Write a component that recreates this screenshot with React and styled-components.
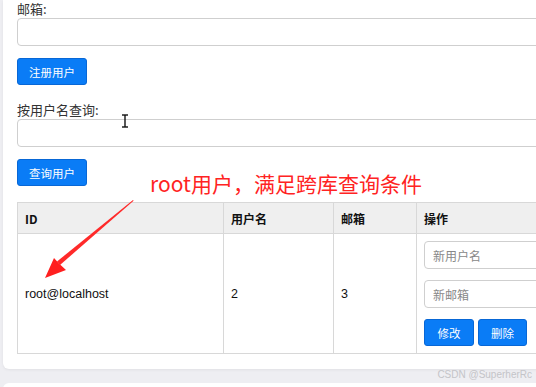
import React from 'react'
import styled, { createGlobalStyle } from 'styled-components'

const GlobalStyle = createGlobalStyle`
  html, body {
    margin: 0;
    padding: 0;
    background: #eeeef2;
    overflow: hidden;
  }
  body {
    font-family: "Noto Sans CJK SC", "Noto Sans", sans-serif;
  }
`

const Page = styled.div`
  position: relative;
  width: 536px;
  height: 387px;
  overflow: hidden;
  padding-left: 3px;
  box-sizing: border-box;
`

const Card = styled.div`
  width: 600px;
  background: #fff;
  border-radius: 0 0 6px 6px;
  padding: 2px 0 15px 14px;
  box-sizing: border-box;
  box-shadow: 0 1px 3px rgba(0, 0, 0, 0.06);
`

const NextCard = styled.div`
  width: 600px;
  height: 20px;
  margin-top: 14px;
  background: #fff;
  border-radius: 6px 6px 0 0;
`

const Field = styled.div`
  display: flex;
  flex-direction: column;
  gap: 2px;
`

const Label = styled.label`
  font-size: 13px;
  line-height: 14px;
  color: #333;
`

const TextInput = styled.input`
  width: 560px;
  height: 28px;
  box-sizing: border-box;
  border: 1px solid #cfcfcf;
  border-radius: 4px;
  background: #fff;
  padding: 0 8px;
  font-family: inherit;
  font-size: 12px;
  outline: none;
  &::placeholder {
    color: #888;
  }
`

const Button = styled.button`
  width: ${p => p.$w || 70}px;
  height: 27px;
  border: 1px solid #0867d6;
  border-radius: 3px;
  background: #0a7cf6;
  color: #fff;
  font-family: inherit;
  font-size: 11.5px;
  padding: 0;
  cursor: pointer;
  margin-top: ${p => p.$mt || 0}px;
`

const Form = styled.div`
  display: flex;
  flex-direction: column;
  align-items: flex-start;
`

const Spacer = styled.div`
  height: ${p => p.$h}px;
`

const Table = styled.table`
  border-collapse: collapse;
  table-layout: fixed;
  width: 600px;
  margin-top: 16px;
  font-size: 12px;
  color: #111;
`

const Th = styled.th`
  width: ${p => p.$w}px;
  height: 31px;
  box-sizing: border-box;
  background: #efefef;
  border: 1px solid #d8d8d8;
  text-align: left;
  padding: 0 7px;
  font-weight: 700;
  font-size: 12px;
`

const Td = styled.td`
  height: 120px;
  box-sizing: border-box;
  border: 1px solid #d8d8d8;
  padding: 0 7px;
  vertical-align: middle;
  font-family: "Liberation Sans", "Noto Sans CJK SC", sans-serif;
  font-size: 12.5px;
`

const ActionCell = styled(Td)`
  padding: 7px 7px;
  font-family: "Noto Sans CJK SC", sans-serif;
`

const ActionBox = styled.div`
  display: flex;
  flex-direction: column;
  gap: 11px;
`

const ButtonRow = styled.div`
  display: flex;
  gap: 4px;
`

const Note = styled.div`
  position: absolute;
  left: 150px;
  top: 169px;
  color: #ff2323;
  font-size: 21px;
  line-height: 28px;
  white-space: nowrap;
`

const Overlay = styled.svg`
  position: absolute;
  left: 0;
  top: 0;
  pointer-events: none;
`

const Watermark = styled.div`
  position: absolute;
  right: 4px;
  top: 369px;
  font-family: "Liberation Sans", Arial, sans-serif;
  font-size: 10px;
  color: #c4c4c8;
`

const App = () => {
  return (
    <Page>
      <GlobalStyle />
      <Card>
        <Form>
          <Field>
            <Label>邮箱:</Label>
            <TextInput />
          </Field>
          <Button $mt={12}>注册用户</Button>
          <Spacer $h={18} />
          <Field>
            <Label>按用户名查询:</Label>
            <TextInput />
          </Field>
          <Button $mt={12}>查询用户</Button>
        </Form>
        <Table>
          <thead>
            <tr>
              <Th $w={206}>ID</Th>
              <Th $w={110}>用户名</Th>
              <Th $w={83}>邮箱</Th>
              <Th>操作</Th>
            </tr>
          </thead>
          <tbody>
            <tr>
              <Td>root@localhost</Td>
              <Td>2</Td>
              <Td>3</Td>
              <ActionCell>
                <ActionBox>
                  <TextInput placeholder="新用户名" />
                  <TextInput placeholder="新邮箱" />
                  <ButtonRow>
                    <Button $w={50}>修改</Button>
                    <Button $w={49}>删除</Button>
                  </ButtonRow>
                </ActionBox>
              </ActionCell>
            </tr>
          </tbody>
        </Table>
      </Card>
      <NextCard />
      <Note>root用户，满足跨库查询条件</Note>
      <Overlay width="536" height="387" viewBox="0 0 536 387">
        <polygon points="133,200 133.6,200.8 60,265 57,261.5" fill="#ff2a2a" />
        <polygon points="45,278 54,258 59,263.5 66,270" fill="#ff1f1f" />
        <g stroke="#111" strokeWidth="1.4" fill="none">
          <line x1="125" y1="115" x2="125" y2="127" />
          <line x1="122" y1="115" x2="128" y2="115" />
          <line x1="122" y1="127" x2="128" y2="127" />
        </g>
      </Overlay>
      <Watermark>CSDN @SuperherRc</Watermark>
    </Page>
  )
}

export default App
